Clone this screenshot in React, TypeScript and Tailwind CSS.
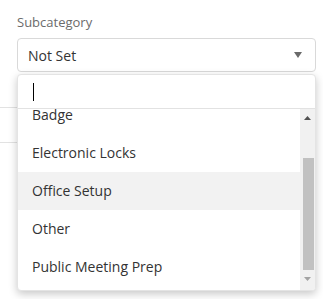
import React from 'react';

const options = ['Badge', 'Electronic Locks', 'Office Setup', 'Other', 'Public Meeting Prep'];

export default function App() {
  const highlighted = 'Office Setup';

  return (
    <div className="relative w-[323px] h-[299px] overflow-hidden bg-white font-['Open_Sans',sans-serif] text-[#333]">
      {/* rows behind the dropdown */}
      <div className="absolute left-0 top-[107px] w-[200px] border-t border-[#e2e2e2]" />
      <div className="absolute left-0 top-[142px] w-[200px] border-t border-[#e2e2e2]" />

      <div className="px-[17px] pt-[13px]">
        <label className="block text-[13px] leading-[18px] text-[#6b6b6b] mb-[7px]">Subcategory</label>

        <div className="relative w-[299px]">
          {/* select */}
          <div className="h-[34px] flex items-center justify-between pl-[10px] pr-[13px] border border-[#d9d9d9] rounded-[4px] bg-white">
            <span className="text-[14px]">Not Set</span>
            <svg width="8" height="6" viewBox="0 0 8 6">
              <path d="M0 0h8L4 6z" fill="#6a6a6a" />
            </svg>
          </div>

          {/* dropdown */}
          <div className="absolute left-0 right-0 top-[36px] h-[217px] bg-white rounded-[4px] border border-[#e4e4e4] shadow-[0_3px_8px_rgba(0,0,0,0.22)] flex flex-col overflow-hidden z-10">
            <div className="h-[34px] shrink-0 flex items-center pl-[15px] border-b border-[#e2e2e2]">
              <div className="w-px h-[18px] bg-black" />
            </div>

            <div className="flex flex-1 min-h-0">
              <div className="flex-1 overflow-hidden">
                <ul className="-mt-[13px]">
                  {options.map((o) => (
                    <li
                      key={o}
                      className={`h-[38px] flex items-center pl-[14px] pb-[2px] text-[14px] ${o === highlighted ? 'bg-[#f2f2f2]' : ''}`}
                    >
                      {o}
                    </li>
                  ))}
                </ul>
              </div>

              {/* scrollbar */}
              <div className="w-[15px] shrink-0 bg-[#f1f1f1] flex flex-col items-center">
                <div className="h-[17px] flex items-center justify-center">
                  <svg width="7" height="4" viewBox="0 0 7 4">
                    <path d="M3.5 0L7 4H0z" fill="#505050" />
                  </svg>
                </div>
                <div className="mt-[32px] w-[11px] h-[112px] ml-[1px] bg-[#c1c1c1]" />
                <div className="h-[17px] flex items-center justify-center">
                  <svg width="7" height="4" viewBox="0 0 7 4">
                    <path d="M0 0h7L3.5 4z" fill="#a3a3a3" />
                  </svg>
                </div>
              </div>
            </div>
          </div>
        </div>
      </div>
    </div>
  );
}
